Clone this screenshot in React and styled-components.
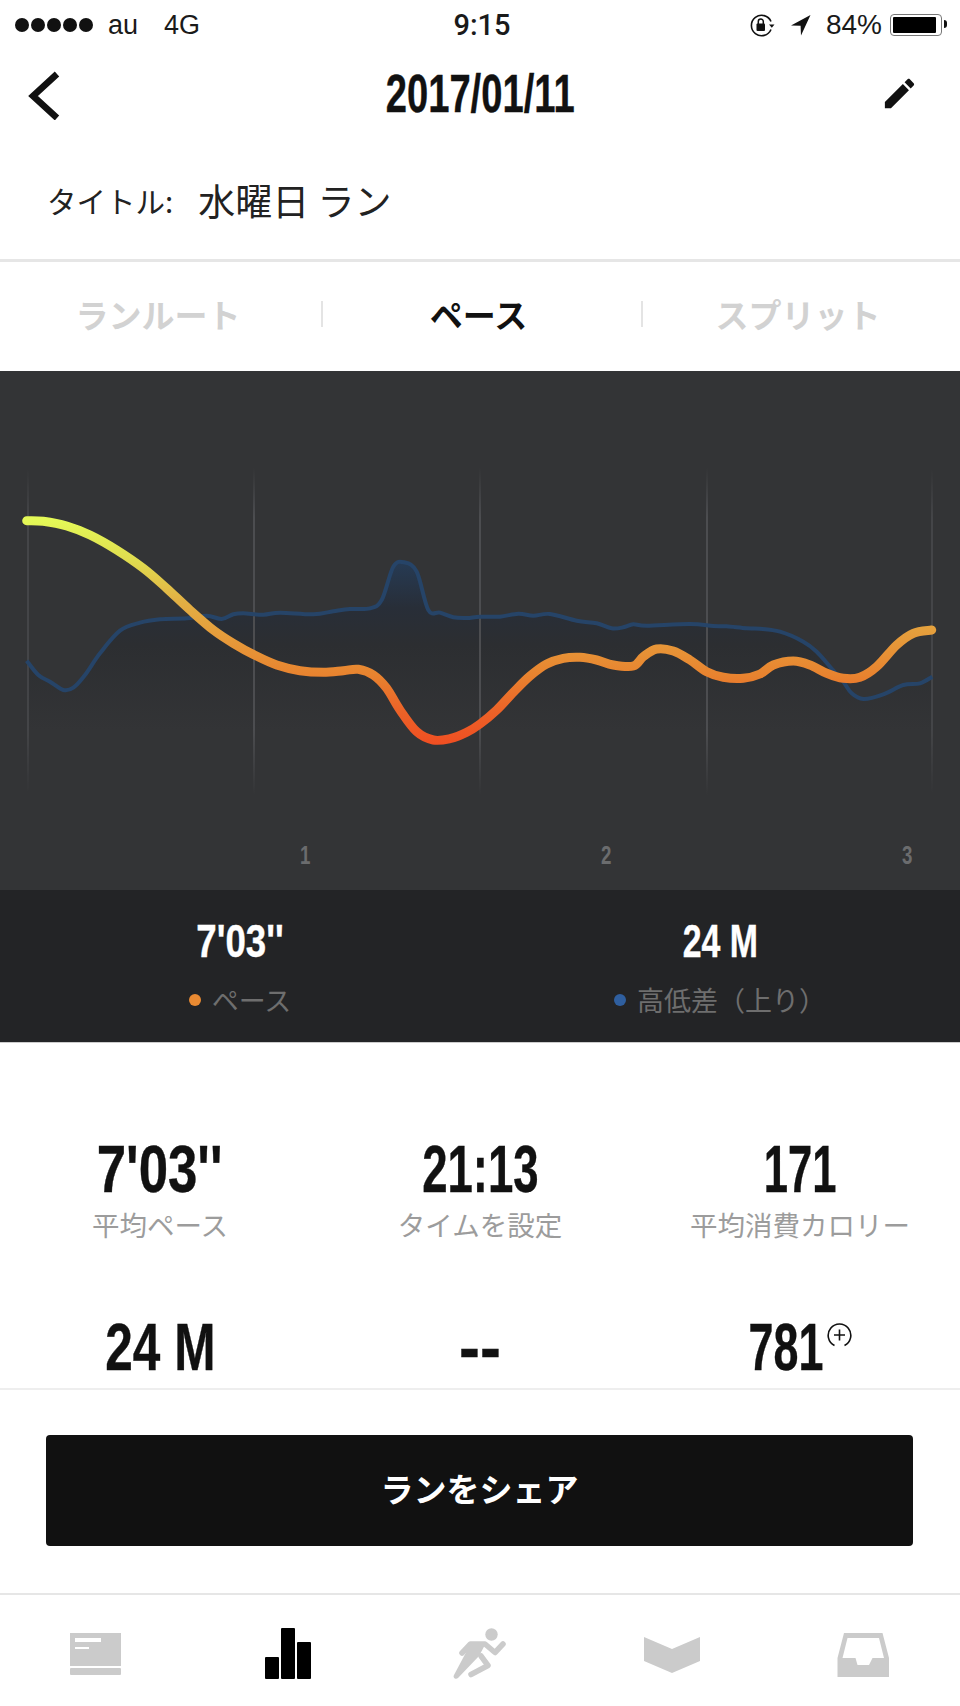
import { createGlobalStyle, styled } from 'styled-components';

const jp = `"Noto Sans CJK JP", "Liberation Sans", sans-serif`;

const GlobalStyle = createGlobalStyle`
html, body {
  margin: 0;
  padding: 0;
  background: #fff;
}
* {
  box-sizing: border-box;
}
`;

const Page = styled.div`
width: 960px;
height: 1706px;
display: flex;
flex-direction: column;
overflow: hidden;
background: #fff;
color: #111;
font-family: ${jp};
`;

const StatusBar = styled.div`
height: 48px;
padding: 2px 13px 0 15px;
display: grid;
grid-template-columns: 1fr auto 1fr;
align-items: center;
font-family: "Liberation Sans", sans-serif;
font-size: 27px;
color: #1a1a1a;
`;

const StatusLeft = styled.div`
display: flex;
align-items: center;
`;

const Signal = styled.div`
display: flex;
gap: 2px;
margin-right: 15px;
`;

const SignalDot = styled.span`
width: 14px;
height: 14px;
border-radius: 50%;
background: #111;
`;

const Carrier = styled.span`
margin-right: ${({ $gap }) => $gap || 0}px;
`;

const Clock = styled.div`
font-family: Roboto, sans-serif;
font-weight: 500;
font-size: 29px;
margin-left: 2px;
`;

const StatusRight = styled.div`
display: flex;
align-items: center;
justify-content: flex-end;
`;

const StatusItem = styled.div`
display: flex;
margin-right: ${({ $gap }) => $gap}px;
`;

const BatteryLevel = styled.span`
font-size: 28px;
margin-right: 8px;
`;

const Battery = styled.div`
width: 52px;
height: 22px;
border: 1.5px solid #777;
border-radius: 4px;
padding: 2px;
margin-right: 5px;
position: relative;
display: flex;

&::before {
  content: '';
  width: 43px;
  background: #000;
  border-radius: 1px;
}

&::after {
  content: '';
  position: absolute;
  right: -6px;
  top: 5px;
  width: 3px;
  height: 8px;
  background: #111;
  border-radius: 0 3px 3px 0;
}
`;

const Nav = styled.div`
height: 90px;
padding: 0 26px;
display: grid;
grid-template-columns: 1fr auto 1fr;
align-items: center;
`;

const NavRight = styled.div`
display: flex;
justify-content: flex-end;
padding-right: 15px;
`;

const Condensed = styled.span`
display: inline-block;
font-family: "Liberation Sans", sans-serif;
font-weight: 700;
font-size: ${({ $size }) => $size}px;
line-height: 1;
white-space: nowrap;
transform: scaleX(${({ $sx }) => $sx});
margin: 0 ${({ $trim }) => $trim || 0}px;
color: ${({ $light }) => ($light ? '#fff' : '#111')};
-webkit-text-stroke: 0.4px currentColor;
`;

const AxisDigit = styled.span`
display: inline-block;
font-family: "Liberation Sans", sans-serif;
font-weight: 700;
font-size: 26px;
line-height: 1;
transform: scaleX(0.72);
`;

const TitleRow = styled.div`
height: 124px;
padding: 3px 0 0 47px;
display: flex;
align-items: center;
border-bottom: 3px solid #e6e6e6;
`;

const TitleLabel = styled.span`
font-size: 29.5px;
color: #222;
margin-right: 25px;
`;

const TitleValue = styled.span`
font-size: 37px;
color: #222;
`;

const Tabs = styled.div`
height: 109px;
padding-bottom: 6px;
display: grid;
grid-template-columns: 321px 320px 319px;
align-items: center;
`;

const Tab = styled.div`
position: relative;
padding-right: 5px;
text-align: center;
font-size: 33px;
font-weight: 700;
line-height: 40px;
color: ${({ $active }) => ($active ? '#111' : '#d2d2d2')};

&:not(:first-child)::before {
  content: '';
  position: absolute;
  left: 0;
  top: 7px;
  width: 2px;
  height: 26px;
  background: #e4e4e4;
}
`;

const ChartPanel = styled.div`
height: 519px;
background: #333436;
display: flex;
flex-direction: column;
`;

const ChartSvg = styled.svg`
display: block;
width: 960px;
height: 460px;
`;

const AxisRow = styled.div`
flex: 1;
padding: 0 0 11px 155px;
display: grid;
grid-template-columns: repeat(3, 301px);
align-items: center;
`;

const AxisTick = styled.div`
text-align: center;
color: #6b6c6e;
`;

const Summary = styled.div`
height: 153px;
background: #232426;
border-bottom: 1px solid #ccc;
display: grid;
grid-template-columns: 480px 480px;
padding-top: 27px;
`;

const SummaryCell = styled.div`
display: flex;
flex-direction: column;
align-items: center;
`;

const SummaryLabel = styled.div`
display: flex;
align-items: center;
gap: 11px;
margin-top: 19px;
font-size: 27px;
line-height: 34px;
color: #6e6e6e;
`;

const Dot = styled.span`
width: 12px;
height: 12px;
border-radius: 50%;
background: ${({ $color }) => $color};
`;

const Stats = styled.div`
flex: 1;
min-height: 0;
overflow: hidden;
padding-top: 93px;
display: grid;
grid-template-columns: repeat(3, 320px);
grid-auto-rows: 104px;
row-gap: 74px;
`;

const Stat = styled.div`
display: flex;
flex-direction: column;
align-items: center;
`;

const StatValue = styled.div`
display: flex;
align-items: flex-start;
justify-content: center;
height: 66px;
`;

const StatLabel = styled.div`
margin-top: 6px;
font-size: 27.5px;
line-height: 32px;
white-space: nowrap;
color: #9c9c9c;
`;

const Badge = styled.span`
display: block;
margin: 9px 0 0 3px;
`;

const Sheet = styled.div`
border-top: 2px solid #eeeeee;
padding: 45px 47px 47px 46px;
`;

const ShareButton = styled.button`
display: block;
width: 100%;
height: 111px;
padding: 0 0 5px;
border: none;
border-radius: 4px;
background: #111;
color: #fff;
font-family: ${jp};
font-size: 33px;
font-weight: 700;
`;

const TabBar = styled.div`
height: 113px;
border-top: 2px solid #e6e6e6;
padding-top: 25px;
display: grid;
grid-template-columns: repeat(5, 192px);
justify-items: center;
align-items: start;
`;

const TabIcon = styled.svg`
display: block;
width: 80px;
height: 70px;
fill: ${({ $active }) => ($active ? '#000' : '#cbcbcb')};
stroke: ${({ $active }) => ($active ? '#000' : '#cbcbcb')};
stroke-width: 0;
`;

// zoomed reference coords -> page coords
const fromLeft = (pts) => pts.map(([x, y]) => [x / 3, 450 + y / 3]);
const fromRight = (pts) => pts.map(([x, y]) => [480 + x / 3, 450 + y / 3]);

const pacePoints = [
  ...fromLeft([[80, 212], [130, 214], [200, 228], [270, 255], [350, 300], [430, 355], [500, 415], [570, 480], [640, 540], [700, 580], [763, 615], [830, 645], [900, 662], [970, 667], [1030, 662], [1075, 658], [1120, 675], [1160, 715], [1200, 780], [1250, 845], [1300, 870], [1350, 866], [1400, 847]]),
  ...fromRight([[0, 822], [50, 780], [100, 727], [150, 678], [200, 642], [250, 625], [300, 622], [350, 630], [400, 645], [460, 648], [490, 620], [530, 597], [580, 603], [630, 630], [680, 665], [730, 682], [790, 685], [840, 672], [880, 645], [940, 633], [990, 645], [1040, 670], [1090, 685], [1140, 682], [1190, 650], [1250, 585], [1300, 550], [1355, 540]]),
];

const elevationPoints = [
  ...fromLeft([[80, 632], [115, 675], [150, 695], [190, 720], [220, 713], [255, 675], [300, 610], [360, 542], [420, 518], [480, 508], [560, 505], [620, 497], [665, 507], [700, 493], [730, 490], [790, 494], [840, 488], [940, 493], [1000, 484], [1050, 477], [1110, 475], [1145, 450], [1180, 350], [1213, 337], [1250, 365], [1285, 480], [1320, 488], [1360, 502], [1400, 504]]),
  ...fromRight([[0, 500], [60, 500], [115, 491], [160, 497], [210, 492], [290, 512], [350, 520], [395, 535], [430, 532], [460, 523], [500, 527], [630, 522], [700, 528], [740, 529], [800, 535], [840, 536], [900, 545], [970, 575], [1010, 605], [1050, 650], [1090, 695], [1115, 730], [1150, 747], [1210, 733], [1270, 705], [1320, 700], [1357, 680]]),
];

function smoothPath(points) {
  let d = `M${points[0][0].toFixed(1)} ${points[0][1].toFixed(1)}`;
  for (let i = 0; i < points.length - 1; i++) {
    const p0 = points[i - 1] || points[i];
    const p1 = points[i];
    const p2 = points[i + 1];
    const p3 = points[i + 2] || p2;
    const c1x = p1[0] + (p2[0] - p0[0]) / 6;
    const c1y = p1[1] + (p2[1] - p0[1]) / 6;
    const c2x = p2[0] - (p3[0] - p1[0]) / 6;
    const c2y = p2[1] - (p3[1] - p1[1]) / 6;
    d += ` C${c1x.toFixed(1)} ${c1y.toFixed(1)} ${c2x.toFixed(1)} ${c2y.toFixed(1)} ${p2[0].toFixed(1)} ${p2[1].toFixed(1)}`;
  }
  return d;
}

const elevationLine = smoothPath(elevationPoints);

function Chart() {
  return (
    <ChartSvg viewBox="0 371 960 460">
      <defs>
        <linearGradient id="pace" gradientUnits="userSpaceOnUse" x1="0" y1="520" x2="0" y2="745">
          <stop offset="0" stopColor="#e4f957" />
          <stop offset="0.18" stopColor="#e0dc4f" />
          <stop offset="0.36" stopColor="#e2b044" />
          <stop offset="0.53" stopColor="#e69a3a" />
          <stop offset="0.69" stopColor="#e8832f" />
          <stop offset="0.84" stopColor="#ec6428" />
          <stop offset="1" stopColor="#f04e22" />
        </linearGradient>
        <linearGradient id="elevFill" gradientUnits="userSpaceOnUse" x1="0" y1="560" x2="0" y2="730">
          <stop offset="0" stopColor="#263b55" />
          <stop offset="0.28" stopColor="#282e38" />
          <stop offset="0.5" stopColor="#2c2e31" />
          <stop offset="1" stopColor="#333436" />
        </linearGradient>
        <linearGradient id="grid" gradientUnits="userSpaceOnUse" x1="0" y1="468" x2="0" y2="795">
          <stop offset="0" stopColor="#4c4d50" stopOpacity="0" />
          <stop offset="0.15" stopColor="#4c4d50" />
          <stop offset="0.8" stopColor="#4c4d50" />
          <stop offset="1" stopColor="#4c4d50" stopOpacity="0" />
        </linearGradient>
      </defs>
      <path d={`${elevationLine} L932 730 L28 730 Z`} fill="url(#elevFill)" />
      <g stroke="url(#grid)" strokeWidth="2">
        <path d="M254 468V795M480 468V795M707 468V795" />
        <path d="M28 468V810M932 468V810" opacity="0.7" />
      </g>
      <path d={elevationLine} fill="none" stroke="#264468" strokeWidth="4" strokeLinejoin="round" />
      <path d={smoothPath(pacePoints)} fill="none" stroke="url(#pace)" strokeWidth="9" strokeLinecap="round" strokeLinejoin="round" />
    </ChartSvg>
  );
}

function RotationLock() {
  return (
    <svg width="26" height="23" viewBox="0 0 26 23">
      <path d="M22 15.5A10.2 10.2 0 1 1 22 7.5" fill="none" stroke="#111" strokeWidth="1.6" />
      <path d="M20 10.5h5.5l-2.7 3.2z" fill="#111" />
      <rect x="7.5" y="9.5" width="8.5" height="7.5" rx="1" fill="#111" />
      <path d="M9.3 10V7.6a2.5 2.5 0 0 1 5 0V10" fill="none" stroke="#111" strokeWidth="1.5" />
    </svg>
  );
}

function LocationArrow() {
  return (
    <svg width="20" height="21" viewBox="0 0 20 21">
      <path d="M0 10.5L19.5 0L10 20.5L9.6 10.8Z" fill="#111" />
    </svg>
  );
}

function BackIcon() {
  return (
    <svg width="36" height="54" viewBox="0 -3 36 54">
      <path d="M31 5L7 27L31 49" fill="none" stroke="#111" strokeWidth="6.5" />
    </svg>
  );
}

function PencilIcon() {
  return (
    <svg width="39" height="39" viewBox="0 0 24 24">
      <path fill="#111" d="M3 17.25V21h3.75L17.81 9.94l-3.75-3.75L3 17.25zM20.71 7.04c.39-.39.39-1.02 0-1.41l-2.34-2.34c-.39-.39-1.02-.39-1.41 0l-1.83 1.83 3.75 3.75 1.83-1.83z" />
    </svg>
  );
}

function PlusCircle() {
  return (
    <svg width="25" height="24" viewBox="0 0 25 24" style={{ display: 'block' }}>
      <path d="M7.5 22.5A11.3 11.3 0 1 1 17.5 22.5" fill="none" stroke="#111" strokeWidth="1.6" />
      <path d="M12.5 6.5V17.5M7 12H18" fill="none" stroke="#111" strokeWidth="1.6" />
    </svg>
  );
}

function FeedIcon() {
  return (
    <TabIcon viewBox="0 0 80 70">
      <path fillRule="evenodd" d="M14 13H65V46H14ZM19 18V22H45V18ZM19 27V29H33V27Z" />
      <rect x="14" y="48" width="51" height="7" rx="1" />
    </TabIcon>
  );
}

function ActivityIcon() {
  return (
    <TabIcon $active viewBox="0 0 80 70">
      <rect x="17" y="37" width="14" height="22" rx="1" />
      <rect x="33" y="8" width="14" height="51" rx="1" />
      <rect x="49" y="22" width="14" height="37" rx="1" />
    </TabIcon>
  );
}

function RunnerIcon() {
  return (
    <TabIcon viewBox="0 0 80 70">
      <circle cx="51.5" cy="14.5" r="6.2" />
      <g fill="none" strokeLinecap="round" strokeLinejoin="round" style={{ strokeWidth: 5.5 }}>
        <path d="M22 33L30.5 24H45L55 32.5L63 24" />
        <path d="M41 36L48 45.5L31 54.5" />
      </g>
      <path d="M31 23H46L39 36L18 58C15.5 60 12.5 57.5 14 55Z" />
    </TabIcon>
  );
}

function ProgramIcon() {
  return (
    <TabIcon viewBox="0 0 80 70">
      <path d="M12 17L40 29L68 17V41L40 53L12 41Z" />
    </TabIcon>
  );
}

function InboxIcon() {
  return (
    <TabIcon viewBox="0 0 80 70">
      <path fillRule="evenodd" d="M20 13H58.5L65 38V57H13.5V38ZM23.5 18L18.5 38H31.5L33.5 45H45L48.5 38H60L55 18Z" />
    </TabIcon>
  );
}

export default function App() {
  return (
    <Page>
      <GlobalStyle />
      <StatusBar>
        <StatusLeft>
          <Signal>
            {[0, 1, 2, 3, 4].map((i) => (
              <SignalDot key={i} />
            ))}
          </Signal>
          <Carrier $gap={26}>au</Carrier>
          <Carrier>4G</Carrier>
        </StatusLeft>
        <Clock>9:15</Clock>
        <StatusRight>
          <StatusItem $gap={16}><RotationLock /></StatusItem>
          <StatusItem $gap={15}><LocationArrow /></StatusItem>
          <BatteryLevel>84%</BatteryLevel>
          <Battery />
        </StatusRight>
      </StatusBar>

      <Nav>
        <BackIcon />
        <Condensed $size={53} $sx={0.72}>2017/01/11</Condensed>
        <NavRight>
          <PencilIcon />
        </NavRight>
      </Nav>

      <TitleRow>
        <TitleLabel>タイトル:</TitleLabel>
        <TitleValue>水曜日 ラン</TitleValue>
      </TitleRow>

      <Tabs>
        <Tab>ランルート</Tab>
        <Tab $active>ペース</Tab>
        <Tab>スプリット</Tab>
      </Tabs>

      <ChartPanel>
        <Chart />
        <AxisRow>
          <AxisTick><AxisDigit>1</AxisDigit></AxisTick>
          <AxisTick><AxisDigit>2</AxisDigit></AxisTick>
          <AxisTick><AxisDigit>3</AxisDigit></AxisTick>
        </AxisRow>
      </ChartPanel>

      <Summary>
        <SummaryCell>
          <Condensed $light $size={47} $sx={0.78}>7'03''</Condensed>
          <SummaryLabel>
            <Dot $color="#e98a32" />
            ペース
          </SummaryLabel>
        </SummaryCell>
        <SummaryCell>
          <Condensed $light $size={47} $sx={0.72}>24 M</Condensed>
          <SummaryLabel>
            <Dot $color="#2f5f9f" />
            高低差（上り）
          </SummaryLabel>
        </SummaryCell>
      </Summary>

      <Stats>
        <Stat>
          <StatValue><Condensed $size={66} $sx={0.8}>7'03''</Condensed></StatValue>
          <StatLabel>平均ペース</StatLabel>
        </Stat>
        <Stat>
          <StatValue><Condensed $size={66} $sx={0.69}>21:13</Condensed></StatValue>
          <StatLabel>タイムを設定</StatLabel>
        </Stat>
        <Stat>
          <StatValue><Condensed $size={66} $sx={0.66}>171</Condensed></StatValue>
          <StatLabel>平均消費カロリー</StatLabel>
        </Stat>
        <Stat>
          <StatValue><Condensed $size={66} $sx={0.75}>24 M</Condensed></StatValue>
          <StatLabel>高低差（上り）</StatLabel>
        </Stat>
        <Stat>
          <StatValue><Condensed $size={66} $sx={0.95}>--</Condensed></StatValue>
        </Stat>
        <Stat>
          <StatValue>
            <Condensed $size={66} $sx={0.68} $trim={-17.5}>781</Condensed>
            <Badge><PlusCircle /></Badge>
          </StatValue>
        </Stat>
      </Stats>

      <Sheet>
        <ShareButton>ランをシェア</ShareButton>
      </Sheet>

      <TabBar>
        <FeedIcon />
        <ActivityIcon />
        <RunnerIcon />
        <ProgramIcon />
        <InboxIcon />
      </TabBar>
    </Page>
  );
}
